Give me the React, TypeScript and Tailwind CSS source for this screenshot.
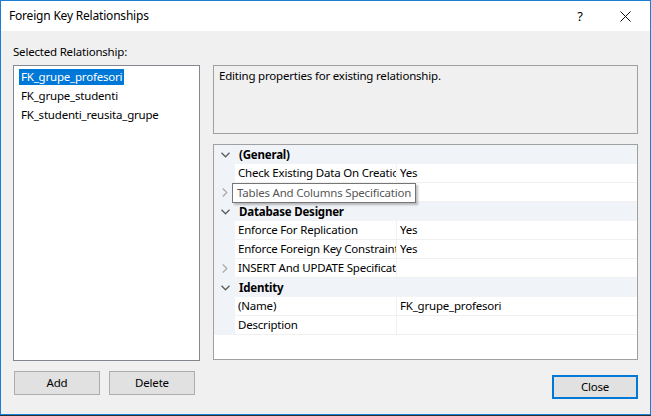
import React from 'react'

const font = { fontFamily: '"Noto Sans", "Open Sans", sans-serif' }

const Down = ({ light }: { light?: boolean }) => (
  <svg width="9" height="6" viewBox="0 0 9 6" className="block">
    <path d="M0.5 0.8 L4.5 4.8 L8.5 0.8" fill="none" stroke={light ? '#a8a8a8' : '#5c5c5c'} strokeWidth="1.3" />
  </svg>
)

const Right = () => (
  <svg width="6" height="9" viewBox="0 0 6 9" className="block">
    <path d="M0.8 0.5 L4.8 4.5 L0.8 8.5" fill="none" stroke="#ababab" strokeWidth="1.3" />
  </svg>
)

type Row =
  | { kind: 'cat'; label: string }
  | { kind: 'prop'; label: string; value?: string; expandable?: boolean }

const rows: Row[] = [
  { kind: 'cat', label: '(General)' },
  { kind: 'prop', label: 'Check Existing Data On Creation Or Re-Enabling', value: 'Yes' },
  { kind: 'prop', label: 'Tables And Columns Specification', expandable: true },
  { kind: 'cat', label: 'Database Designer' },
  { kind: 'prop', label: 'Enforce For Replication', value: 'Yes' },
  { kind: 'prop', label: 'Enforce Foreign Key Constraint', value: 'Yes' },
  { kind: 'prop', label: 'INSERT And UPDATE Specification', expandable: true },
  { kind: 'cat', label: 'Identity' },
  { kind: 'prop', label: '(Name)', value: 'FK_grupe_profesori' },
  { kind: 'prop', label: 'Description', value: '' },
]

const relationships = ['FK_grupe_profesori', 'FK_grupe_studenti', 'FK_studenti_reusita_grupe']

export default function App() {
  return (
    <div className="w-[651px] h-[416px] bg-[#2a2f36]" style={font}>
      <div className="w-[651px] h-[415px] border border-[#1a7fd4] bg-[#f0f0f0] flex flex-col text-[11.5px] tracking-[-0.2px] text-black">
        {/* Title bar */}
        <div className="h-[30px] bg-white flex items-center shrink-0">
          <span className="ml-[8px] flex-1 leading-none text-[12px]">Foreign Key Relationships</span>
          <span className="w-[12px] text-center mr-[34px] text-[13px] leading-none">?</span>
          <svg width="11" height="11" viewBox="0 0 11 11" className="mr-[19px]">
            <path d="M0.5 0.5 L10.5 10.5 M10.5 0.5 L0.5 10.5" stroke="#111" strokeWidth="1" />
          </svg>
        </div>

        {/* Body */}
        <div className="flex pl-[12px] gap-[13px]">
          {/* Left column */}
          <div className="w-[187px] flex flex-col">
            <div className="mt-[13px] h-[16px] leading-[16px]">Selected Relationship:</div>
            <div className="mt-[5px] h-[296px] bg-white border border-[#828790] pt-[1px] pl-[5px]">
              {relationships.map((r, i) => (
                <div key={r} className="h-[19px] flex items-center">
                  <span
                    className={
                      i === 0
                        ? 'bg-[#0078d7] text-white px-[2px] leading-[16px]'
                        : 'px-[2px] leading-[16px]'
                    }
                  >
                    {r}
                  </span>
                </div>
              ))}
            </div>
            <div className="flex gap-[9px] mt-[10px] pl-[1px]">
              <button className="w-[86px] h-[24px] bg-[#e1e1e1] border border-[#adadad]">Add</button>
              <button className="w-[86px] h-[24px] bg-[#e1e1e1] border border-[#adadad]">Delete</button>
            </div>
          </div>

          {/* Right column */}
          <div className="w-[425px] flex flex-col pt-[34px]">
            <div className="h-[69px] border border-[#a0a0a0] px-[5px] pt-[1px] leading-[18px]">
              Editing properties for existing relationship.
            </div>
            <div className="relative mt-[10px] h-[216px] border border-[#a0a0a0] bg-white">
              {rows.map((row, i) =>
                row.kind === 'cat' ? (
                  <div key={i} className="h-[19px] flex items-center bg-[#f0f4f9]">
                    <div className="w-[21px] flex justify-center pl-[1px]">
                      <Down />
                    </div>
                    <span className="font-bold pl-[4px] leading-none">{row.label}</span>
                  </div>
                ) : (
                  <div key={i} className="h-[19px] flex">
                    <div className="w-[21px] bg-[#f0f4f9] flex items-center justify-center">
                      {row.expandable && <Right />}
                    </div>
                    <div className="w-[161px] border-b border-[#f0f0f0] bg-white flex items-center px-[3px] overflow-hidden whitespace-nowrap">
                      {row.label}
                    </div>
                    <div className="flex-1 border-b border-l border-[#f0f0f0] bg-white flex items-center px-[3px]">
                      {row.value}
                    </div>
                  </div>
                ),
              )}
              {/* tooltip */}
              <div className="absolute left-[18px] top-[38px] h-[20px] px-[4px] flex items-center bg-white border border-[#767676] text-[#575757] shadow-[2px_2px_2px_rgba(0,0,0,0.25)] whitespace-nowrap">
                Tables And Columns Specification
              </div>
            </div>
            <div className="flex justify-end mt-[15px]">
              <button className="w-[86px] h-[24px] bg-[#e1e1e1] border-2 border-[#0078d7]">Close</button>
            </div>
          </div>
        </div>
      </div>
    </div>
  )
}
